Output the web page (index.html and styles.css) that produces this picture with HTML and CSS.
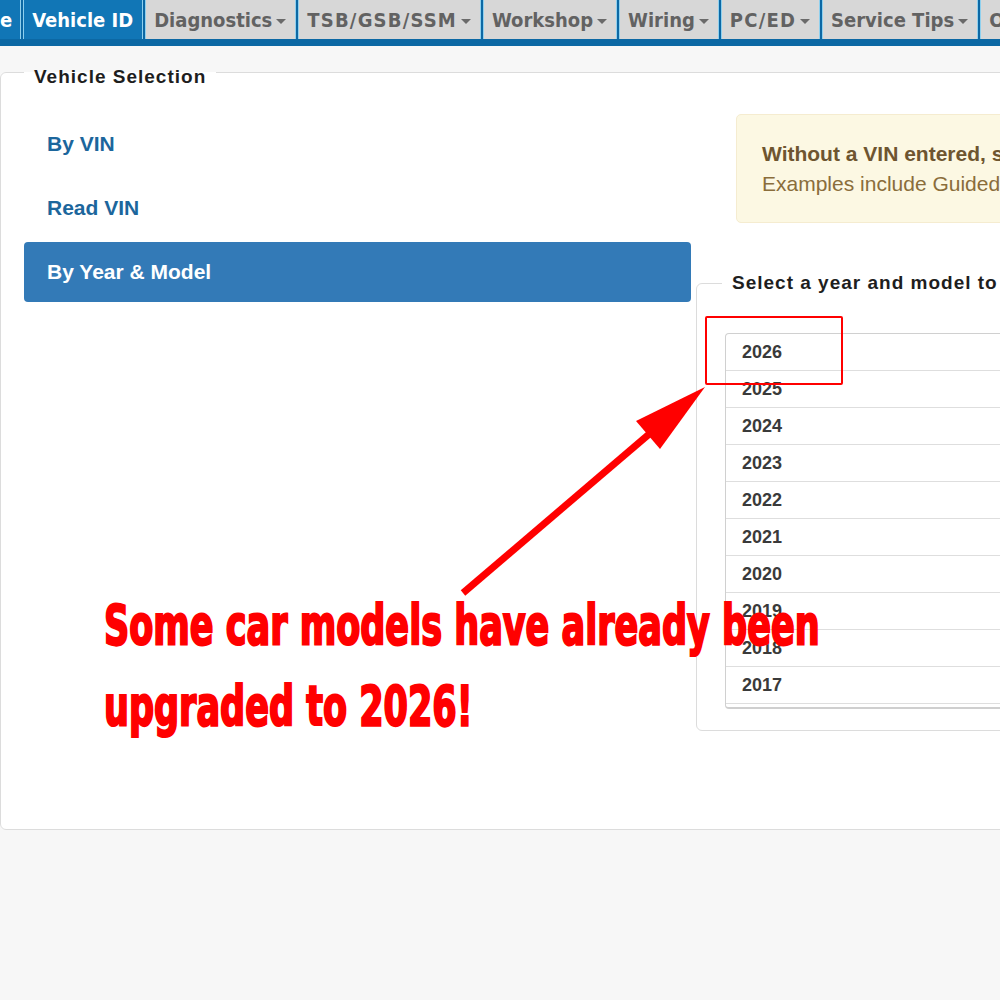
FILE: index.html
```html
<!DOCTYPE html>
<html>
<head>
<meta charset="utf-8">
<link rel="stylesheet" href="styles.css">
</head>
<body>
<nav class="topnav">
  <a class="tab active">e</a>
  <a class="tab active">Vehicle ID</a>
  <a class="tab">Diagnostics<span class="caret"></span></a>
  <a class="tab tab-wide">TSB/GSB/SSM<span class="caret"></span></a>
  <a class="tab">Workshop<span class="caret"></span></a>
  <a class="tab">Wiring<span class="caret"></span></a>
  <a class="tab tab-wide">PC/ED<span class="caret"></span></a>
  <a class="tab">Service Tips<span class="caret"></span></a>
  <a class="tab">Other<span class="caret"></span></a>
</nav>
<main class="page">
  <fieldset class="panel">
    <legend class="legend">Vehicle Selection</legend>
    <div class="cols">
      <ul class="pills">
        <li class="pill"><a>By VIN</a></li>
        <li class="pill"><a>Read VIN</a></li>
        <li class="pill active"><a>By Year &amp; Model</a></li>
      </ul>
      <div class="right">
        <div class="alert">
          <div class="alert-line"><strong>Without a VIN entered, some content may not be filtered for the vehicle.</strong></div>
          <div class="alert-line">Examples include Guided Diagnostics, Wiring and Service Tips.</div>
        </div>
        <fieldset class="yearbox">
          <legend class="legend legend-inner">Select a year and model to continue</legend>
          <div class="yearlist">
            <div class="year">2026</div>
            <div class="year">2025</div>
            <div class="year">2024</div>
            <div class="year">2023</div>
            <div class="year">2022</div>
            <div class="year">2021</div>
            <div class="year">2020</div>
            <div class="year">2019</div>
            <div class="year">2018</div>
            <div class="year">2017</div>
            <div class="year">2016</div>
          </div>
        </fieldset>
      </div>
    </div>
  </fieldset>
</main>
<div class="highlight"></div>
<svg class="arrow" width="1000" height="1000" viewBox="0 0 1000 1000">
  <line x1="463" y1="593" x2="668" y2="418" stroke="#ff0000" stroke-width="7"/>
  <polygon points="705,387 636,421 660,449" fill="#ff0000"/>
</svg>
<div class="caption">
  <div class="caption-line">Some car models have already been</div>
  <div class="caption-line">upgraded to 2026!</div>
</div>
</body>
</html>
```
FILE: styles.css
```css
html, body {
  margin: 0;
  padding: 0;
  overflow: hidden;
  height: 1000px;
}
body {
  position: relative;
  background: #f7f7f7;
  font-family: "Liberation Sans", Arial, sans-serif;
  width: 1000px;
}
.topnav {
  display: flex;
  background: #0c68a4;
  height: 39px;
  padding-bottom: 7px;
  gap: 2px;
  width: 1400px;
}
.tab {
  display: flex;
  align-items: center;
  height: 39px;
  padding: 0 9px 0 8px;
  background: #d7d7d7;
  color: #626262;
  font-family: "DejaVu Sans", sans-serif;
  font-stretch: condensed;
  font-weight: bold;
  font-size: 20px;
  border-left: 1px solid #8fd0ee;
  border-right: 1px solid #8fd0ee;
  box-sizing: border-box;
  white-space: nowrap;
}
.tab-wide {
  letter-spacing: 1.2px;
}
.tab:first-child {
  padding-left: 0;
  padding-right: 8px;
  border-left: none;
}
.tab.active {
  background: #1176b6;
  color: #fff;
}
.caret {
  width: 0;
  height: 0;
  border-left: 5px solid transparent;
  border-right: 5px solid transparent;
  border-top: 5px solid #6a6a6a;
  margin-left: 4px;
  margin-top: 3px;
}
.page {
  width: 1500px;
  padding-top: 10px;
}
.panel {
  margin: 0;
  padding: 26px 0 98px 23px;
  border: 1px solid #dcdcdc;
  border-radius: 6px;
  background: #fff;
  min-width: 0;
}
.legend {
  padding: 10px 10px 0 10px;
  font-size: 19px;
  line-height: 22px;
  font-weight: bold;
  letter-spacing: 1px;
  color: #1e1e1e;
}
.cols {
  display: flex;
  gap: 5px;
}
.pills {
  list-style: none;
  margin: 0;
  padding: 0;
  width: 667px;
  flex: none;
  display: flex;
  flex-direction: column;
  gap: 4px;
}
.pill a {
  display: block;
  height: 60px;
  line-height: 60px;
  padding-left: 23px;
  font-size: 21px;
  font-weight: bold;
  color: #1c669c;
  border-radius: 4px;
}
.pill.active a {
  background: #337ab7;
  color: #fff;
}
.right {
  flex: 1;
}
.alert {
  margin-left: 40px;
  background: #fcf8e3;
  border: 1px solid #f5ecd0;
  border-radius: 5px;
  padding: 24px 25px 23px;
  color: #8a6d3b;
  font-size: 21px;
  line-height: 30px;
  white-space: nowrap;
}
.alert strong {
  color: #6e5530;
}
.yearbox {
  margin: 49px 0 0 0;
  padding: 39px 0 21px 25px;
  border: 1px solid #dcdcdc;
  border-radius: 6px;
  min-width: 0;
}
.legend-inner {
  padding: 0 10px;
}
.yearlist {
  margin-left: 3px;
  height: 373px;
  overflow: hidden;
  border: 1px solid #d0d0d0;
  border-bottom: 2px solid #cfcfcf;
  border-radius: 4px 0 0 4px;
}
.year {
  height: 36px;
  line-height: 36px;
  border-bottom: 1px solid #dedede;
  padding-left: 16px;
  font-size: 18px;
  font-weight: bold;
  color: #3a3a3a;
}
.highlight {
  position: absolute;
  left: 705px;
  top: 316px;
  width: 138px;
  height: 69px;
  box-sizing: border-box;
  border: 2px solid #ff0000;
  border-radius: 2px;
}
.arrow {
  position: absolute;
  left: 0;
  top: 0;
}
.caption {
  position: absolute;
  left: 104px;
  top: 586px;
  color: #ff0000;
  font-family: "DejaVu Sans", sans-serif;
  font-stretch: condensed;
  font-weight: bold;
  font-size: 50px;
  line-height: 72.7px;
  white-space: nowrap;
  -webkit-text-stroke: 2px #ff0000;
  transform: scale(0.779, 1.1);
  transform-origin: 0 0;
}
```
